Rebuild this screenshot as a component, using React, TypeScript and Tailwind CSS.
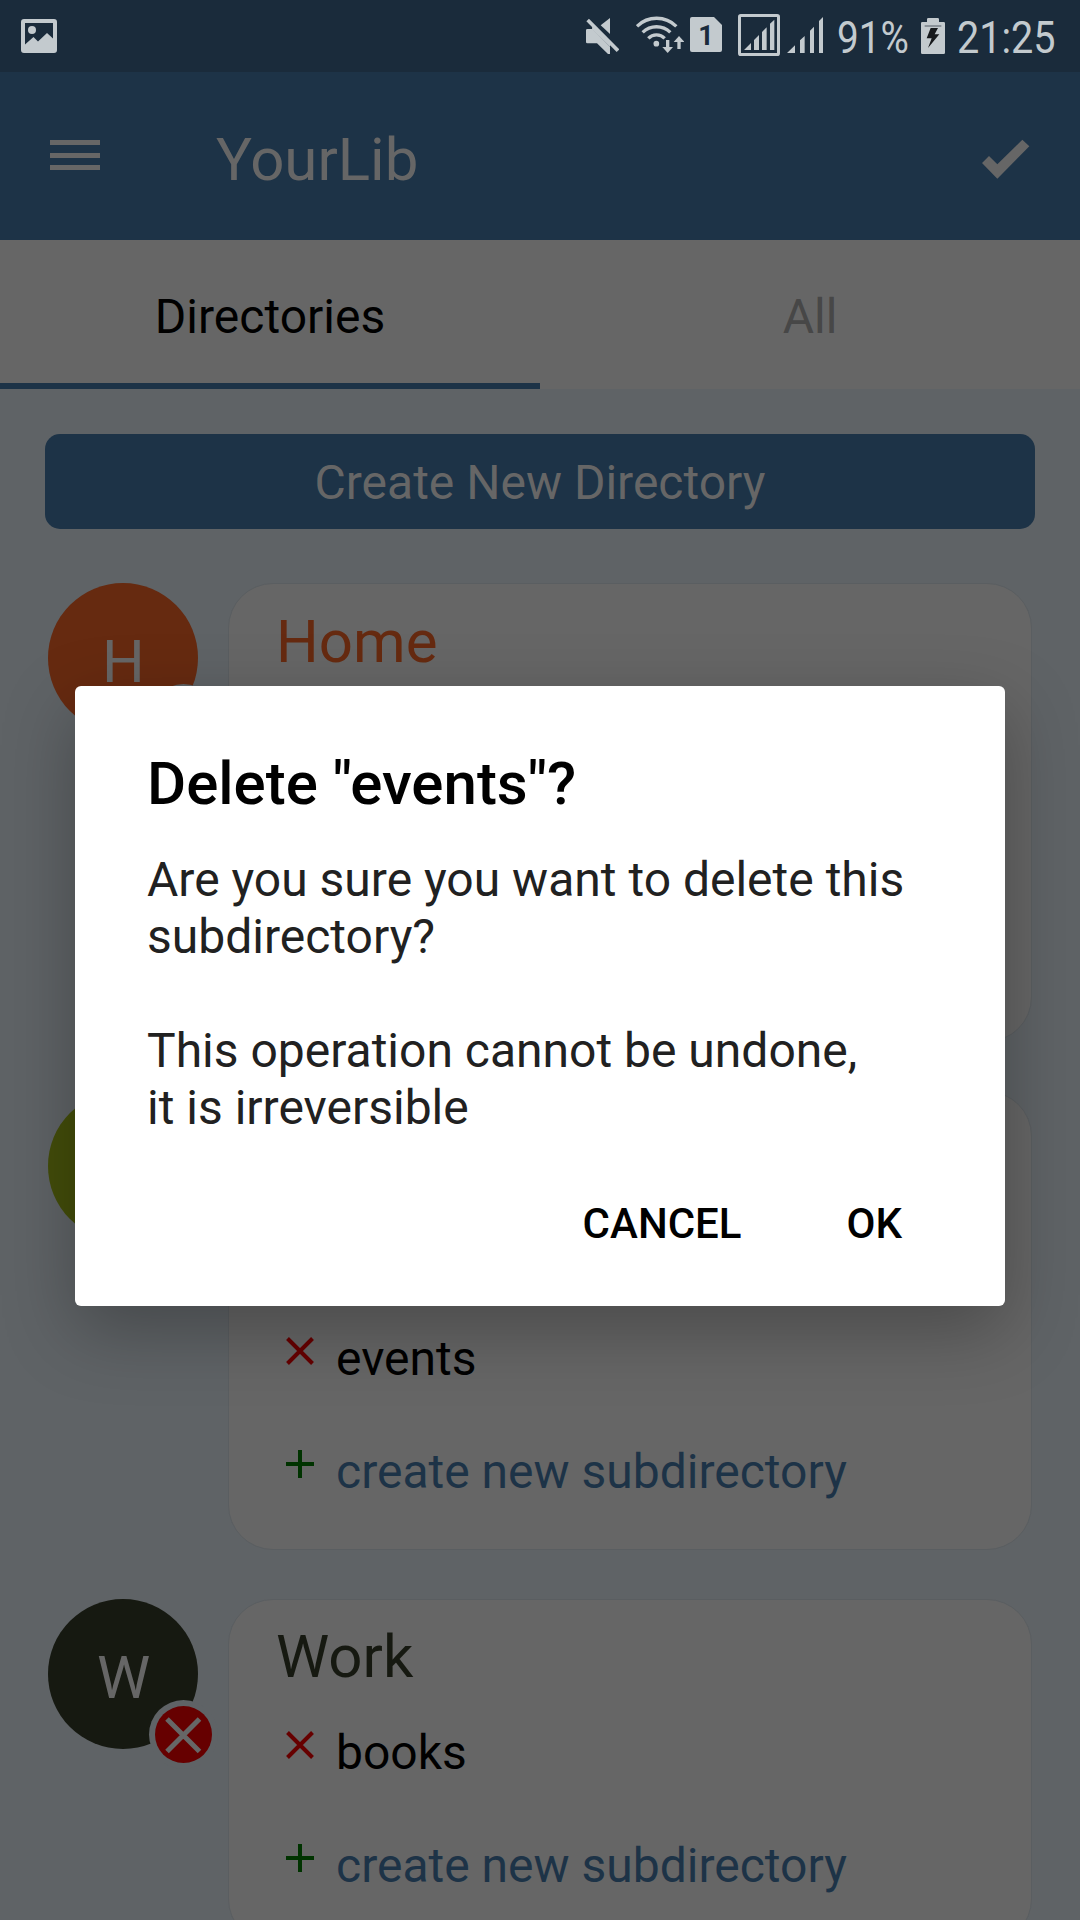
import React from "react";

const ink = "#c3cace";

function StatusBar() {
  return (
    <div className="flex h-[72px] shrink-0 items-start bg-[#1a2b3b] text-[#c3cace]">
      <svg className="mt-[19px] ml-[21px] h-[34px] w-9" viewBox="0 0 36 34" fill={ink}>
        <path
          fillRule="evenodd"
          d="M3 0H33Q36 0 36 3V31Q36 34 33 34H3Q0 34 0 31V3Q0 0 3 0ZM4 4V25.500L12.500 18 17 22.500 26 14 32 19.500V4Z"
        />
        <circle cx="11" cy="11" r="4" />
      </svg>
      <svg className="mt-[17px] ml-[529px] h-[37px] w-[33px]" viewBox="78 51 99 111" fill={ink}>
        <path d="M150 54V102L122 76Z" />
        <path d="M82 87H98L150 140V162H144L111 130H82Q78 130 78 126V91Q78 87 82 87Z" />
        <path d="M98 75L150 127V140L96 87Z" />
        <path d="M83 60L174 152" stroke={ink} strokeWidth="11" />
      </svg>
      <svg className="mt-4 ml-[17px] h-[38px] w-12" viewBox="228 48 144 114" fill={ink}>
        <g fill="none" stroke={ink} strokeWidth="10">
          <path d="M231 79A84 84 0 0 1 349 79" />
          <path d="M248 97A60 60 0 0 1 331 97" />
          <path d="M265 115A34 34 0 0 1 314 115" />
          <path d="M323 120V150" />
          <path d="M357 118V147" />
        </g>
        <circle cx="289" cy="131" r="8.500" />
        <path d="M307 141H339L323 159Z" />
        <path d="M341 126H373L357 108Z" />
      </svg>
      <div className="relative mt-[17px] ml-[6px] h-[35px] w-8">
        <svg className="h-[35px] w-8" viewBox="0 0 96 105" fill={ink}>
          <path d="M6 0H72L96 24V99Q96 105 90 105H6Q0 105 0 99V6Q0 0 6 0Z" />
        </svg>
        <span className="absolute inset-0 text-center text-[27px] leading-[38px] font-bold text-[#1a2b3b]">1</span>
      </div>
      <svg className="mt-[14px] ml-4 h-[42px] w-[42px]" viewBox="534 42 126 126" fill={ink}>
        <rect x="538.500" y="46.500" width="117" height="117" rx="4" fill="none" stroke={ink} strokeWidth="9" />
        <path d="M552 150H573V129ZM582 150V120L597 105V150ZM606 150V96L620 82V150ZM630 150V71L643 59V150Z" />
      </svg>
      <svg className="mt-[17px] ml-[7px] h-9 w-9" viewBox="681 51 108 108" fill={ink}>
        <path d="M681 159H705V136ZM720 159V121L734 108V159ZM750 159V92L762 80V159ZM777 159V63L789 51V159Z" />
      </svg>
      <span className="mt-[11px] ml-[14px] w-[84px] origin-left scale-x-[0.86] text-[45px] leading-[53px]">91%</span>
      <svg className="mt-[18px] ml-0 h-9 w-6" viewBox="423 54 72 108" fill={ink}>
        <path d="M441 58Q441 54 445 54H473Q477 54 477 58V66H491Q495 66 495 70V158Q495 162 491 162H427Q423 162 423 158V70Q423 66 427 66H441Z" />
        <path d="M434 78H484" stroke="#7d868d" strokeWidth="5" />
        <path d="M452 84H474L464 103H478L444 144L455 115H440Z" fill="#16191c" />
      </svg>
      <span className="mt-[11px] ml-[12px] w-[112px] origin-left scale-x-[0.88] text-[45px] leading-[53px]">21:25</span>
    </div>
  );
}

function AppBar() {
  return (
    <header className="flex h-[168px] shrink-0 bg-[#1d3347] text-[#666666]">
      <div className="mt-[68px] ml-[50px] flex h-[30px] w-[50px] flex-col justify-between">
        <div className="h-[5px] bg-[#666666]" />
        <div className="h-[5px] bg-[#666666]" />
        <div className="h-[5px] bg-[#666666]" />
      </div>
      <h1 className="mt-[53px] ml-[116px] text-[60px] leading-[70px]">YourLib</h1>
      <svg className="mt-[67px] mr-[50px] ml-auto h-10 w-12" viewBox="606 417 144 120" fill="#666666">
        <path d="M606 489L627 468L652 493L727 419L748 439L652 536Z" />
      </svg>
    </header>
  );
}

function Tabs() {
  return (
    <div className="grid h-[149px] shrink-0 grid-cols-2 bg-[#666666] text-center text-[48px] leading-[56px]">
      <div className="border-b-[6px] border-[#1d3347] pt-[49px] text-black">Directories</div>
      <div className="pt-[49px] text-[#474747]">All</div>
    </div>
  );
}

function Row({ kind, label }: { kind: "remove" | "create"; label: string }) {
  const remove = kind === "remove";
  return (
    <div className="flex h-[113px] shrink-0 pl-[57px]">
      <svg
        className="mt-[21px] h-7 w-7"
        viewBox="0 0 28 28"
        fill="none"
        stroke={remove ? "#660000" : "#003300"}
        strokeWidth="4"
      >
        <path d={remove ? "M1.500 1.500L26.500 26.500M26.500 1.500L1.500 26.500" : "M14 0V28M0 14H28"} />
      </svg>
      <span className={`mt-[15px] ml-[22px] text-[48px] leading-[56px] ${remove ? "text-black" : "text-[#1d3347]"}`}>
        {label}
      </span>
    </div>
  );
}

function Directory({
  letter,
  avatar,
  children,
}: {
  letter?: string;
  avatar: string;
  children?: React.ReactNode;
}) {
  return (
    <section className="flex shrink-0 items-start pl-12">
      <div className={`relative h-[150px] w-[150px] shrink-0 rounded-full text-center text-[#666666] ${avatar}`}>
        <span className="block pt-11 pl-px text-[60px] leading-[70px]">{letter}</span>
        <div className="absolute top-[101px] left-[101px] flex h-[69px] w-[69px] items-center justify-center rounded-full bg-[#5f6366]">
          <svg className="h-[57px] w-[57px]" viewBox="0 0 57 57">
            <circle cx="28.500" cy="28.500" r="28.500" fill="#660000" />
            <path d="M12 13L44.500 45.500M44.500 13L12 45.500" stroke="#666666" strokeWidth="5" />
          </svg>
        </div>
      </div>
      {children}
    </section>
  );
}

const cardClass =
  "ml-[30px] flex w-[804px] shrink-0 flex-col rounded-[45px] border border-[#5a5e61] bg-[#666666]";

function DeleteDialog() {
  return (
    <div
      role="dialog"
      className="absolute top-[686px] left-[75px] flex h-[620px] w-[930px] flex-col rounded-[6px] bg-white px-[72px] shadow-[0_24px_72px_rgba(0,0,0,0.28)]"
    >
      <h2 className="mt-[63px] text-[60px] leading-[70px] font-medium text-black">Delete "events"?</h2>
      <p className="mt-[32px] text-[48px] leading-[57px] whitespace-nowrap text-[#212121]">
        Are you sure you want to delete this
        <br />
        subdirectory?
        <br />
        <br />
        This operation cannot be undone,
        <br />
        it is irreversible
      </p>
      <div className="mt-[63px] flex justify-end gap-[105px] pr-[31px] text-[42px] leading-[50px] font-medium text-black">
        <button>CANCEL</button>
        <button>OK</button>
      </div>
    </div>
  );
}

export default function App() {
  return (
    <div className="relative flex h-[1920px] w-[1080px] flex-col overflow-hidden bg-[#5f6366] font-['Roboto',sans-serif]">
      <StatusBar />
      <AppBar />
      <Tabs />
      <button className="mx-[45px] mt-[45px] h-[95px] shrink-0 rounded-[15px] bg-[#1d3347] pt-[3px] text-[48px] leading-[56px] text-[#666666]">
        Create New Directory
      </button>
      <main className="mt-[54px] flex shrink-0 flex-col gap-[49px]">
        <Directory letter="H" avatar="bg-[#662a10]">
          <div className={`${cardClass} h-[459px]`}>
            <h3 className="mt-[23px] ml-[47px] text-[60px] leading-[70px] text-[#662a10]">Home</h3>
          </div>
        </Directory>
        <Directory avatar="bg-[#434d0a]">
          <div className={`${cardClass} h-[459px] justify-end pb-[7px]`}>
            <Row kind="remove" label="events" />
            <Row kind="create" label="create new subdirectory" />
          </div>
        </Directory>
        <Directory letter="W" avatar="bg-[#161911]">
          <div className={`${cardClass} h-[345px]`}>
            <h3 className="mt-[22px] mb-[18px] ml-[47px] text-[60px] leading-[70px] text-[#161911]">Work</h3>
            <Row kind="remove" label="books" />
            <Row kind="create" label="create new subdirectory" />
          </div>
        </Directory>
      </main>
      <DeleteDialog />
    </div>
  );
}
